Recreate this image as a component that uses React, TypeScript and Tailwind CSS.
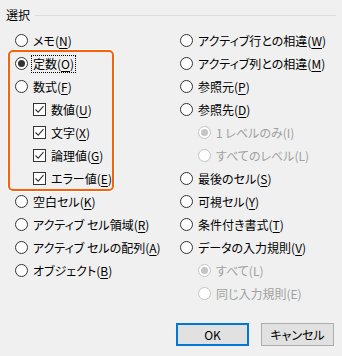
import type { ReactNode } from 'react';

type Opt = {
  label: string;
  key?: string;
  kind?: 'radio' | 'check';
  checked?: boolean;
  disabled?: boolean;
  indent?: boolean;
  focus?: boolean;
};

const LEFT: Opt[] = [
  { label: 'メモ', key: 'N' },
  { label: '定数', key: 'O', checked: true, focus: true },
  { label: '数式', key: 'F' },
  { label: '数値', key: 'U', kind: 'check', checked: true, indent: true },
  { label: '文字', key: 'X', kind: 'check', checked: true, indent: true },
  { label: '論理値', key: 'G', kind: 'check', checked: true, indent: true },
  { label: 'エラー値', key: 'E', kind: 'check', checked: true, indent: true },
  { label: '空白セル', key: 'K' },
  { label: 'アクティブ セル領域', key: 'R' },
  { label: 'アクティブ セルの配列', key: 'A' },
  { label: 'オブジェクト', key: 'B' },
];

const RIGHT: Opt[] = [
  { label: 'アクティブ行との相違', key: 'W' },
  { label: 'アクティブ列との相違', key: 'M' },
  { label: '参照元', key: 'P' },
  { label: '参照先', key: 'D' },
  { label: '1 レベルのみ(I)', checked: true, disabled: true, indent: true },
  { label: 'すべてのレベル(L)', disabled: true, indent: true },
  { label: '最後のセル', key: 'S' },
  { label: '可視セル', key: 'Y' },
  { label: '条件付き書式', key: 'T' },
  { label: 'データの入力規則', key: 'V' },
  { label: 'すべて(L)', checked: true, disabled: true, indent: true },
  { label: '同じ入力規則(E)', disabled: true, indent: true },
];

function Radio({ checked, disabled }: { checked?: boolean; disabled?: boolean }) {
  return (
    <span
      className={`flex h-[13px] w-[13px] shrink-0 items-center justify-center rounded-full border bg-white ${
        disabled ? 'border-[#c4c4c4]' : 'border-[#333333]'
      }`}
    >
      {checked && (
        <span className={`h-[7px] w-[7px] rounded-full ${disabled ? 'bg-[#c4c4c4]' : 'bg-[#333333]'}`} />
      )}
    </span>
  );
}

function Check({ checked }: { checked?: boolean }) {
  return (
    <span className="flex h-[13px] w-[13px] shrink-0 items-center justify-center border border-[#333333] bg-white">
      {checked && (
        <svg width="11" height="11" viewBox="0 0 11 11">
          <path d="M1.5 5.5 L4.2 8.2 L9.5 2.2" fill="none" stroke="#333333" strokeWidth="1.1" />
        </svg>
      )}
    </span>
  );
}

function Label({ o }: { o: Opt }): ReactNode {
  if (!o.key) return o.label;
  return (
    <>
      {o.label}(<span className="underline underline-offset-2">{o.key}</span>)
    </>
  );
}

function Row({ o, checkIndent }: { o: Opt; checkIndent: string }) {
  const pad = o.indent ? checkIndent : '';
  return (
    <div className={`flex h-[23px] items-center ${pad}`}>
      {o.kind === 'check' ? <Check checked={o.checked} /> : <Radio checked={o.checked} disabled={o.disabled} />}
      <span
        className={`ml-[4px] whitespace-nowrap px-[1px] leading-[16px] ${
          o.disabled ? 'text-[#a0a0a0]' : 'text-black'
        } ${o.focus ? 'outline outline-1 outline-dotted outline-black' : ''}`}
      >
        <Label o={o} />
      </span>
    </div>
  );
}

export default function App() {
  return (
    <div
      className="relative h-[356px] w-[342px] overflow-hidden bg-[#f0f0f0] text-[12px] text-black"
      style={{ fontFamily: '"Noto Sans CJK JP", "Noto Sans", sans-serif', fontFeatureSettings: '"palt"' }}
    >
      <div className="flex items-center pl-[6px] pr-[6px] pt-[6px]">
        <span className="leading-[18px]">選択</span>
        <div className="ml-[5px] h-px flex-1 bg-[#dcdcdc]" />
      </div>

      <div className="mt-[5px] grid grid-cols-[165px_1fr] pl-[15px]">
        <div className="flex flex-col">
          {LEFT.map((o) => (
            <Row key={o.label} o={o} checkIndent="pl-[18px]" />
          ))}
        </div>
        <div className="flex flex-col">
          {RIGHT.map((o) => (
            <Row key={o.label} o={o} checkIndent="pl-[18px]" />
          ))}
        </div>
      </div>

      <div className="pointer-events-none absolute left-[8px] top-[50px] h-[141px] w-[106px] rounded-[5px] border-2 border-[#f7630c] shadow-[0_0_0_1px_#ffffff]" />

      <div className="absolute bottom-[10px] right-[8px] flex gap-[12px]">
        <button className="h-[23px] w-[73px] border-2 border-[#0078d7] bg-[#e1e1e1] text-[12px] text-black">
          OK
        </button>
        <button className="h-[23px] w-[73px] border border-[#adadad] bg-[#e1e1e1] text-[12px] text-black">
          キャンセル
        </button>
      </div>
    </div>
  );
}
